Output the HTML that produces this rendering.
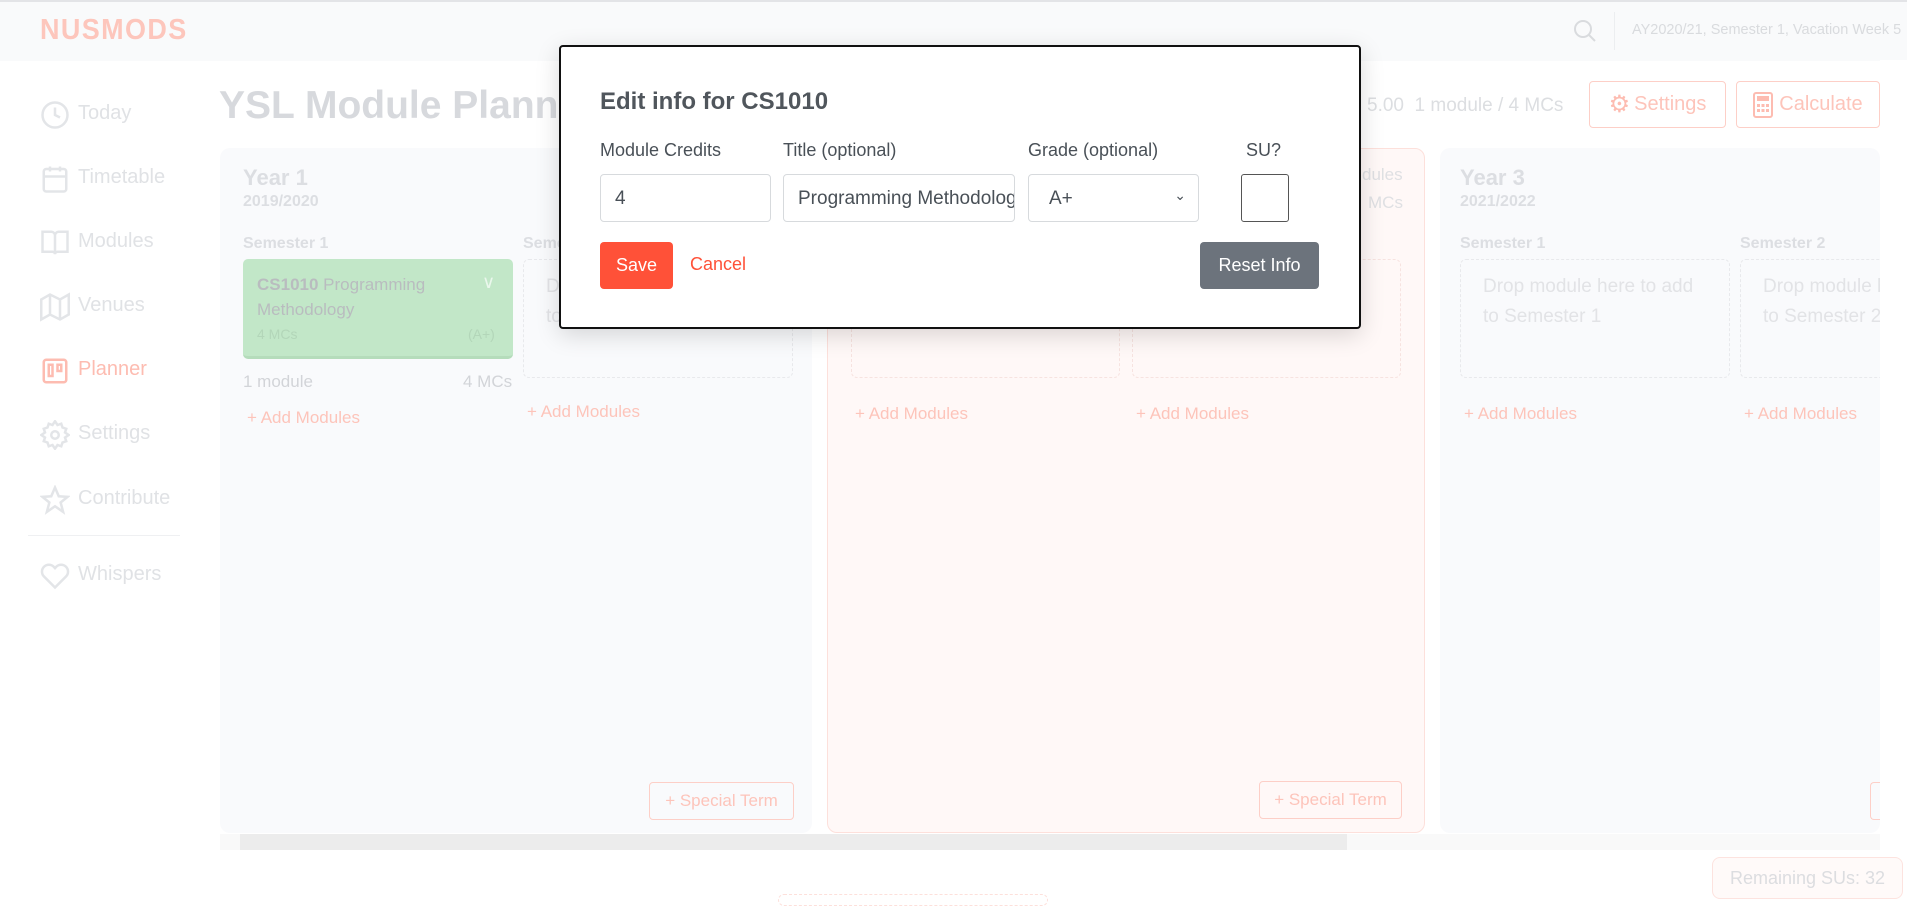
<!DOCTYPE html>
<html><head><meta charset="utf-8"><style>
*{box-sizing:border-box;margin:0;padding:0}
body{width:1907px;height:902px;overflow:hidden;background:#fff;font-family:"Liberation Sans",sans-serif;position:relative}
.a{position:absolute;white-space:nowrap}
.hdr{position:absolute;left:0;top:0;width:1907px;height:61px;background:#f9fafb;border-top:2px solid #e3e4e7}
.nav{color:#e0e2e5;font-size:20px}
.nav svg{position:absolute;left:-38px;top:-2px}
.panel{position:absolute;background:#f9fafc;border-radius:10px}
.h1{font-weight:bold;color:#dcdee2;font-size:22px}
.h2{font-weight:bold;color:#dcdee2;font-size:16px}
.sem{font-weight:bold;color:#dcdee2;font-size:16px}
.drop{position:absolute;border:1px dashed #e8e9ec;border-radius:6px}
.dt{color:#e2e3e6;font-size:19px;line-height:30px;position:absolute;left:22px;top:12px;white-space:nowrap}
.add{color:#fdc4ba;font-size:17px}
.btnp{position:absolute;border:1px solid #fdcfc7;border-radius:4px;color:#fdc4ba;font-size:17px;display:flex;align-items:center;justify-content:center}
.lbl{color:#495057;font-size:18px}
.inp{position:absolute;border:1px solid #d7dadd;border-radius:4px;background:#fff;color:#495057;font-size:19px;padding-left:14px;padding-top:2px;display:flex;align-items:center;overflow:hidden;white-space:nowrap}
</style></head><body>
<div class="hdr"></div>
<div class="a" style="left:40px;top:14px;font-size:29px;font-weight:bold;color:#fdc6bc;letter-spacing:1.5px;transform:scaleX(0.93);transform-origin:left">NUSMODS</div>
<svg class="a" style="left:1573px;top:19px" width="24" height="24" viewBox="0 0 24 24" fill="none" stroke="#d9dbde" stroke-width="2"><circle cx="10" cy="10" r="8"/><path d="M16 16l6 6"/></svg>
<div class="a" style="left:1614px;top:12px;width:1px;height:38px;background:#eceef0"></div>
<div class="a" style="left:1632px;top:22px;font-size:14.5px;color:#d9dbde">AY2020/21, Semester 1, Vacation Week 5</div>

<div class="a nav" style="left:78px;top:102px"><svg width="30" height="30" viewBox="0 0 24 24" fill="none" stroke="#e3e5e8" stroke-width="2"><circle cx="12" cy="12" r="10"/><path d="M12 6v6l4 2"/></svg>Today</div>
<div class="a nav" style="left:78px;top:166px"><svg width="30" height="30" viewBox="0 0 24 24" fill="none" stroke="#e3e5e8" stroke-width="2"><rect x="3" y="4" width="18" height="18" rx="2"/><path d="M16 2v4M8 2v4M3 10h18"/></svg>Timetable</div>
<div class="a nav" style="left:78px;top:230px"><svg width="30" height="30" viewBox="0 0 24 24" fill="none" stroke="#e3e5e8" stroke-width="2"><path d="M2 3h7a3 3 0 013 3v15a2 2 0 00-2-2H2zM22 3h-7a3 3 0 00-3 3v15a2 2 0 012-2h8z"/></svg>Modules</div>
<div class="a nav" style="left:78px;top:294px"><svg width="30" height="30" viewBox="0 0 24 24" fill="none" stroke="#e3e5e8" stroke-width="2"><path d="M1 6v16l7-4 8 4 7-4V2l-7 4-8-4-7 4zM8 2v16M16 6v16"/></svg>Venues</div>
<div class="a nav" style="left:78px;top:358px;color:#fdbcb1"><svg width="30" height="30" viewBox="0 0 24 24" fill="none" stroke="#fdbcb1" stroke-width="2"><rect x="3" y="3" width="18" height="18" rx="2"/><rect x="7" y="7" width="3" height="9"/><rect x="14" y="7" width="3" height="5"/></svg>Planner</div>
<div class="a nav" style="left:78px;top:422px"><svg width="30" height="30" viewBox="0 0 24 24" fill="none" stroke="#e3e5e8" stroke-width="2"><circle cx="12" cy="12" r="3"/><path d="M12 1l2 3 3-1 1 3 3 1-1 3 3 2-3 2 1 3-3 1-1 3-3-1-2 3-2-3-3 1-1-3-3-1 1-3-3-2 3-2-1-3 3-1 1-3 3 1z"/></svg>Settings</div>
<div class="a nav" style="left:78px;top:487px"><svg width="30" height="30" viewBox="0 0 24 24" fill="none" stroke="#e3e5e8" stroke-width="2"><path d="M12 2l3 7 7 .5-5.5 4.5 2 7.5L12 17l-6.5 4.5 2-7.5L2 9.5 9 9z"/></svg>Contribute</div>
<div class="a" style="left:28px;top:535px;width:152px;height:1px;background:#eff0f2"></div>
<div class="a nav" style="left:78px;top:563px"><svg width="30" height="30" viewBox="0 0 24 24" fill="none" stroke="#e3e5e8" stroke-width="2"><path d="M20.8 4.6a5.5 5.5 0 00-7.8 0L12 5.7l-1-1.1a5.5 5.5 0 00-7.8 7.8L12 21.2l8.8-8.8a5.5 5.5 0 000-7.8z"/></svg>Whispers</div>

<div class="a" style="left:219px;top:84px;font-size:39px;font-weight:bold;color:#d7d9dd">YSL Module Planner</div>
<div class="a" style="left:1367px;top:95px;font-size:19px;color:#dcdee1">5.00&nbsp; 1 module / 4 MCs</div>
<div class="btnp" style="left:1589px;top:81px;width:137px;height:47px;font-size:20px"><span style="color:#fdbcb1;font-size:24px;margin-right:4px">⚙</span>Settings</div>
<div class="btnp" style="left:1736px;top:81px;width:144px;height:47px;font-size:20px"><svg width="20" height="26" viewBox="0 0 20 26" style="margin-right:6px"><rect x="1" y="1" width="18" height="24" rx="2" fill="none" stroke="#fdbcb1" stroke-width="2"/><rect x="4" y="4" width="12" height="5" fill="#fdbcb1"/><g fill="#fdbcb1"><rect x="4" y="12" width="3" height="3"/><rect x="8.5" y="12" width="3" height="3"/><rect x="13" y="12" width="3" height="3"/><rect x="4" y="17" width="3" height="3"/><rect x="8.5" y="17" width="3" height="3"/><rect x="13" y="17" width="3" height="3"/></g></svg>Calculate</div>

<div class="panel" style="left:220px;top:148px;width:592px;height:685px"></div>
<div class="a h1" style="left:243px;top:165px">Year 1</div>
<div class="a h2" style="left:243px;top:193px">2019/2020</div>
<div class="a sem" style="left:243px;top:235px">Semester 1</div>
<div class="a" style="left:243px;top:259px;width:270px;height:100px;background:#c2e7c8;border-radius:5px;border-bottom:3px solid #b5dcbb"></div>
<div class="a" style="left:257px;top:272px;font-size:17px;color:#b9bcbf;line-height:25px"><b>CS1010</b> Programming<br>Methodology</div>
<div class="a" style="left:482px;top:272px;color:#eaf7ec;font-size:18px">∨</div>
<div class="a" style="left:257px;top:326px;font-size:14px;color:#b3d6b9">4 MCs</div>
<div class="a" style="left:468px;top:326px;font-size:14px;color:#b3d6b9">(A+)</div>
<div class="a" style="left:243px;top:372px;font-size:17px;color:#d2d4d8">1 module</div>
<div class="a" style="left:463px;top:372px;font-size:17px;color:#d2d4d8">4 MCs</div>
<div class="a add" style="left:247px;top:408px">+ Add Modules</div>
<div class="a sem" style="left:523px;top:235px">Semester 2</div>
<div class="drop" style="left:523px;top:259px;width:270px;height:119px"><div class="dt">Drop module here to add<br>to Semester 2</div></div>
<div class="a add" style="left:527px;top:402px">+ Add Modules</div>
<div class="btnp" style="left:649px;top:782px;width:145px;height:38px">+ Special Term</div>

<div class="panel" style="left:827px;top:148px;width:598px;height:685px;background:#fff8f7;border:1px solid #fde0db"></div>
<div class="a" style="left:1362px;top:165px;font-size:17px;color:#dfe0e3">dules</div>
<div class="a" style="left:1368px;top:193px;font-size:17px;color:#dfe0e3">MCs</div>
<div class="drop" style="left:851px;top:259px;width:269px;height:119px;border-color:#f7e3e0"></div>
<div class="drop" style="left:1132px;top:259px;width:269px;height:119px;border-color:#f7e3e0"></div>
<div class="a add" style="left:855px;top:404px">+ Add Modules</div>
<div class="a add" style="left:1136px;top:404px">+ Add Modules</div>
<div class="btnp" style="left:1259px;top:781px;width:143px;height:38px">+ Special Term</div>

<div class="panel" style="left:1440px;top:148px;width:440px;height:685px"></div>
<div class="a h1" style="left:1460px;top:165px">Year 3</div>
<div class="a h2" style="left:1460px;top:193px">2021/2022</div>
<div class="a sem" style="left:1460px;top:235px">Semester 1</div>
<div class="a sem" style="left:1740px;top:235px">Semester 2</div>
<div class="drop" style="left:1460px;top:259px;width:270px;height:119px"><div class="dt">Drop module here to add<br>to Semester 1</div></div>
<div class="drop" style="left:1740px;top:259px;width:160px;height:119px;border-right:none;overflow:hidden"><div class="dt">Drop module here to add<br>to Semester 2</div></div>
<div class="a add" style="left:1464px;top:404px">+ Add Modules</div>
<div class="a add" style="left:1744px;top:404px">+ Add Modules</div>
<div class="a" style="left:1870px;top:782px;width:12px;height:38px;border:1px solid #fdcfc7;border-right:none;border-radius:4px 0 0 4px"></div>
<div class="a" style="left:1880px;top:60px;width:27px;height:842px;background:#fff"></div>

<div class="a" style="left:220px;top:834px;width:1660px;height:16px;background:#f9f9f9"></div>
<div class="a" style="left:240px;top:834px;width:1107px;height:16px;background:#ececec"></div>
<div class="a" style="left:1712px;top:857px;width:191px;height:42px;border:1px solid #fde3df;border-radius:8px;background:#fffaf9;color:#dcdde0;font-size:18px;display:flex;align-items:center;justify-content:center">Remaining SUs: 32</div>
<div class="a" style="left:778px;top:894px;width:270px;height:12px;border:1px dashed #fde0db;border-radius:8px"></div>

<div class="a" style="left:559px;top:45px;width:802px;height:284px;background:#fff;border:2px solid #111;border-radius:4px;box-shadow:0 6px 24px rgba(0,0,0,0.15)"></div>
<div class="a" style="left:600px;top:88px;font-size:24px;font-weight:bold;color:#50565c">Edit info for CS1010</div>
<div class="a lbl" style="left:600px;top:140px">Module Credits</div>
<div class="a lbl" style="left:783px;top:140px">Title (optional)</div>
<div class="a lbl" style="left:1028px;top:140px">Grade (optional)</div>
<div class="a lbl" style="left:1246px;top:140px">SU?</div>
<div class="inp" style="left:600px;top:174px;width:171px;height:48px">4</div>
<div class="inp" style="left:783px;top:174px;width:232px;height:48px">Programming Methodology</div>
<div class="inp" style="left:1028px;top:174px;width:171px;height:48px;padding-left:20px">A+<span style="position:absolute;right:12px;top:12px;font-size:14px">⌄</span></div>
<div class="a" style="left:1241px;top:174px;width:48px;height:48px;border:1px solid #555;border-radius:3px"></div>
<div class="a" style="left:600px;top:242px;width:73px;height:47px;background:#ff5138;border-radius:4px;color:#fff;font-size:18px;display:flex;align-items:center;justify-content:center">Save</div>
<div class="a" style="left:690px;top:254px;font-size:18px;color:#ff5138">Cancel</div>
<div class="a" style="left:1200px;top:242px;width:119px;height:47px;background:#6c737c;border-radius:4px;color:#fff;font-size:18px;display:flex;align-items:center;justify-content:center">Reset Info</div>
</body></html>
